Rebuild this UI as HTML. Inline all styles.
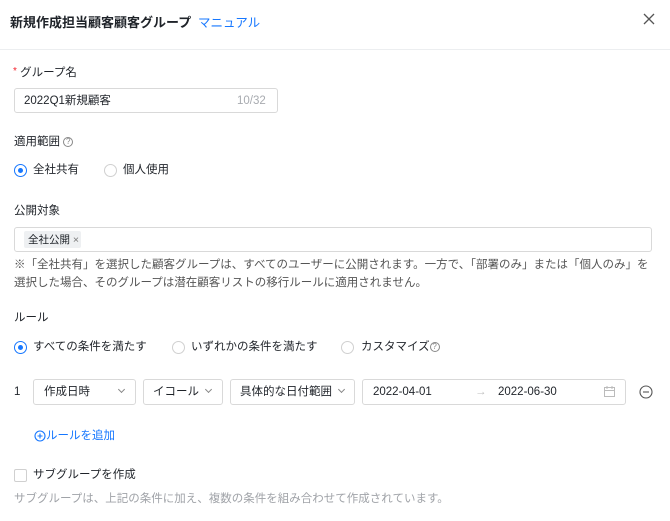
<!DOCTYPE html>
<html><head><meta charset="utf-8"><style>
*{box-sizing:border-box;margin:0;padding:0}
body{width:670px;height:521px;background:#fff;position:relative;overflow:hidden;font-family:"Liberation Sans","Noto Sans CJK JP",sans-serif;font-size:11.5px;color:#1f2329}
.a{position:absolute;white-space:nowrap;line-height:16px}
.box{position:absolute;border:1px solid #d9d9d9;border-radius:3px;background:#fff}
.radio{position:absolute;width:13px;height:13px;border:1px solid #d0d0d0;border-radius:50%;background:#fff}
.radio.on{border-color:#1677ff}
.radio.on:after{content:"";position:absolute;left:3px;top:3px;width:5px;height:5px;border-radius:50%;background:#1677ff}
.chev{position:absolute;width:5px;height:5px;border-right:1px solid #888;border-bottom:1px solid #888;transform:rotate(45deg)}
.q{display:inline-block;width:10px;height:10px;border:1px solid #888;border-radius:50%;font-size:8px;line-height:8px;text-align:center;color:#888;vertical-align:1px}
</style></head><body>
<div class="a" style="left:10px;top:15px;font-size:13px;font-weight:bold;color:#1f2329">新規作成担当顧客顧客グループ</div>
<div class="a" style="left:198px;top:15px;font-size:12.5px;color:#1677ff">マニュアル</div>
<svg style="position:absolute;left:643px;top:13px" width="12" height="12"><path d="M1 1L11 11M11 1L1 11" stroke="#555" stroke-width="1.3"/></svg>
<div style="position:absolute;left:0;top:49px;width:670px;height:1px;background:#eceef0"></div>

<div class="a" style="left:13px;top:64px"><span style="color:#f5222d;font-size:10px;vertical-align:2px">*</span> グループ名</div>
<div class="box" style="left:14px;top:88px;width:264px;height:25px"></div>
<div class="a" style="left:24px;top:93px">2022Q1新規顧客</div>
<div class="a" style="left:237px;top:93px;color:#a8abb0">10/32</div>

<div class="a" style="left:14px;top:134px">適用範囲 <span class="q">?</span></div>
<div class="radio on" style="left:14px;top:164px"></div>
<div class="a" style="left:33px;top:162px">全社共有</div>
<div class="radio" style="left:104px;top:164px"></div>
<div class="a" style="left:123px;top:162px">個人使用</div>

<div class="a" style="left:14px;top:203px">公開対象</div>
<div class="box" style="left:14px;top:227px;width:638px;height:25px"></div>
<div style="position:absolute;left:24px;top:231px;width:57px;height:17px;background:#eef0f2;border-radius:2px"></div>
<div class="a" style="left:28px;top:232px;font-size:10.5px">全社公開 <span style="color:#777">×</span></div>
<div class="a" style="left:14px;top:256px;color:#555;line-height:18px">※「全社共有」を選択した顧客グループは、すべてのユーザーに公開されます。一方で、「部署のみ」または「個人のみ」を<br>選択した場合、そのグループは潜在顧客リストの移行ルールに適用されません。</div>

<div class="a" style="left:14px;top:310px">ルール</div>
<div class="radio on" style="left:14px;top:341px"></div>
<div class="a" style="left:33px;top:339px">すべての条件を満たす</div>
<div class="radio" style="left:172px;top:341px"></div>
<div class="a" style="left:191px;top:339px">いずれかの条件を満たす</div>
<div class="radio" style="left:341px;top:341px"></div>
<div class="a" style="left:361px;top:339px">カスタマイズ<span class="q">?</span></div>

<div class="a" style="left:14px;top:384px">1</div>
<div class="box" style="left:33px;top:379px;width:103px;height:26px"></div>
<div class="a" style="left:44px;top:384px">作成日時</div>
<div class="chev" style="left:119px;top:387px"></div>
<div class="box" style="left:143px;top:379px;width:80px;height:26px"></div>
<div class="a" style="left:153px;top:384px">イコール</div>
<div class="chev" style="left:206px;top:387px"></div>
<div class="box" style="left:230px;top:379px;width:125px;height:26px"></div>
<div class="a" style="left:240px;top:384px">具体的な日付範囲</div>
<div class="chev" style="left:339px;top:387px"></div>
<div class="box" style="left:362px;top:379px;width:264px;height:26px"></div>
<div class="a" style="left:373px;top:384px">2022-04-01</div>
<div class="a" style="left:475px;top:384px;color:#bbb">→</div>
<div class="a" style="left:498px;top:384px">2022-06-30</div>
<svg style="position:absolute;left:604px;top:386px" width="11" height="11"><rect x="0.5" y="1.5" width="10" height="9" fill="none" stroke="#bbb"/><path d="M0.5 4.5H10.5M3 0V3M8 0V3" stroke="#bbb"/></svg>
<svg style="position:absolute;left:639px;top:385px" width="14" height="14"><circle cx="7" cy="7" r="6" fill="none" stroke="#555" stroke-width="1.1"/><path d="M4 7H10" stroke="#555" stroke-width="1.1"/></svg>

<svg style="position:absolute;left:34px;top:430px" width="12" height="12"><circle cx="6" cy="6" r="5" fill="none" stroke="#1677ff" stroke-width="1.1"/><path d="M3.5 6H8.5M6 3.5V8.5" stroke="#1677ff" stroke-width="1.1"/></svg>
<div class="a" style="left:46px;top:428px;color:#1677ff">ルールを追加</div>

<div style="position:absolute;left:14px;top:469px;width:13px;height:13px;border:1px solid #d0d0d0;border-radius:2px"></div>
<div class="a" style="left:33px;top:467px">サブグループを作成</div>
<div class="a" style="left:14px;top:491px;color:#a0a3a8">サブグループは、上記の条件に加え、複数の条件を組み合わせて作成されています。</div>
</body></html>
